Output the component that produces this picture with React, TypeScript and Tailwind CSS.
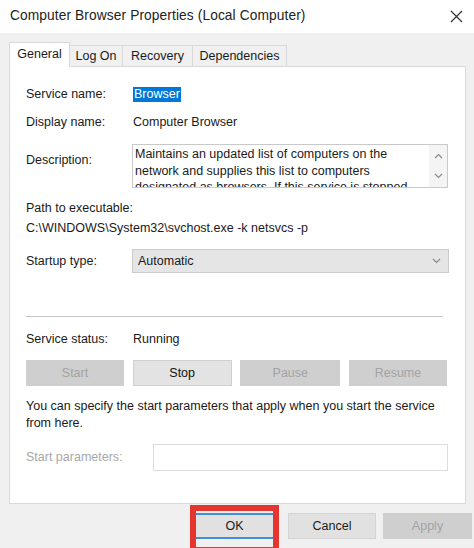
import React from "react";

const FONT = { fontFamily: '"Liberation Sans", Arial, sans-serif' };

function Chevron({ up }: { up?: boolean }) {
  return (
    <svg width="9" height="6" viewBox="0 0 9 6" className="block">
      <path
        d={up ? "M1 5 L4.5 1.5 L8 5" : "M1 1 L4.5 4.5 L8 1"}
        fill="none"
        stroke="#8a8a8a"
        strokeWidth="1.2"
      />
    </svg>
  );
}

function ServiceButton({ label, enabled, w }: { label: string; enabled?: boolean; w: string }) {
  return (
    <div
      className={[
        "h-[26px] flex items-center justify-center text-[12.5px]",
        w,
        enabled
          ? "bg-[#e3e3e3] border border-[#d0d0d0] text-[#111]"
          : "bg-[#cfcfcf] text-[#a3a3a3]",
      ].join(" ")}
    >
      {label}
    </div>
  );
}

export default function App() {
  return (
    <div
      className="w-[474px] h-[548px] bg-[#f0f0f0] overflow-hidden relative text-[#1a1a1a]"
      style={FONT}
    >
      {/* title bar */}
      <div className="h-[33px] bg-white flex items-center justify-between pl-[10px] pr-[10px]">
        <span className="text-[13.75px] text-[#222] tracking-[0.1px]">
          Computer Browser Properties (Local Computer)
        </span>
        <svg width="13" height="13" viewBox="0 0 13 13" className="mr-[1px]">
          <path d="M1 1 L12 12 M12 1 L1 12" stroke="#333" strokeWidth="1.2" />
        </svg>
      </div>

      {/* tabs */}
      <div className="pl-[9px] pt-[10px] flex items-end h-[34px] relative z-10 text-[12.5px]">
        <div className="h-[25px] w-[61px] bg-white border border-b-0 border-[#d9d9d9] flex items-center justify-center pb-[2px]">
          General
        </div>
        <div className="h-[22px] w-[53px] border border-l-0 border-b-0 border-[#d9d9d9] flex items-center justify-center">
          Log On
        </div>
        <div className="h-[22px] w-[70px] border border-l-0 border-b-0 border-[#d9d9d9] flex items-center justify-center">
          Recovery
        </div>
        <div className="h-[22px] w-[94px] border border-l-0 border-b-0 border-[#d9d9d9] flex items-center justify-center">
          Dependencies
        </div>
      </div>

      {/* panel */}
      <div className="ml-[9px] w-[457px] h-[438px] bg-white border border-[#d9d9d9] -mt-px pl-[16px] text-[12.5px]">
        <div className="mt-[19px] flex items-center h-[16px]">
          <span className="w-[107px]">Service name:</span>
          <span className="bg-[#0078d7] text-white px-[1px] h-[15px] leading-[15px]">Browser</span>
        </div>
        <div className="mt-[12px] flex items-center h-[16px]">
          <span className="w-[107px]">Display name:</span>
          <span>Computer Browser</span>
        </div>
        <div className="mt-[14px] flex">
          <span className="w-[106px] pt-[7px]">Description:</span>
          <div className="w-[316px] h-[44px] border border-[#c9c9c9] flex overflow-hidden">
            <div className="flex-1 pl-[2px] pr-[4px] pt-[1px] leading-[16.5px]">
              Maintains an updated list of computers on the network and supplies this list to computers
              designated as browsers. If this service is stopped
            </div>
            <div className="w-[18px] bg-[#f4f4f4] flex flex-col items-center justify-between py-[8px]">
              <Chevron up />
              <Chevron />
            </div>
          </div>
        </div>
        <div className="mt-[12px] h-[16px] leading-[16px]">Path to executable:</div>
        <div className="mt-[4px] h-[16px] leading-[16px]">C:\WINDOWS\System32\svchost.exe -k netsvcs -p</div>
        <div className="mt-[13px] flex items-center">
          <span className="w-[106px]">Startup type:</span>
          <div className="w-[317px] h-[24px] bg-[#e5e5e5] border border-[#cccccc] flex items-center justify-between pl-[5px] pr-[7px]">
            <span>Automatic</span>
            <Chevron />
          </div>
        </div>
        <div className="mt-[43px] w-[417px] h-px bg-[#c4c4c4]" />
        <div className="mt-[14px] flex items-center h-[16px]">
          <span className="w-[107px]">Service status:</span>
          <span>Running</span>
        </div>
        <div className="mt-[13px] flex w-[421px] justify-between">
          <ServiceButton label="Start" w="w-[98px]" />
          <ServiceButton label="Stop" w="w-[99px]" enabled />
          <ServiceButton label="Pause" w="w-[100px]" />
          <ServiceButton label="Resume" w="w-[98px]" />
        </div>
        <div className="mt-[12px] leading-[17px] w-[414px]">
          You can specify the start parameters that apply when you start the service from here.
        </div>
        <div className="mt-[12px] flex items-center">
          <span className="w-[127px] text-[#a8a8a8]">Start parameters:</span>
          <div className="w-[295px] h-[27px] border border-[#dcdcdc] bg-white" />
        </div>
      </div>

      {/* footer */}
      <div className="flex items-start pl-[190px] mt-px">
        <div className="border-[6px] border-[#e5352f] px-0 pt-[2px] pb-[8px]">
          <div className="w-[77px] h-[26px] bg-[#e1e1e1] border-y-2 border-[#3f8fdc] flex items-center justify-center text-[12.5px]">
            OK
          </div>
        </div>
        <div className="ml-[9px] mt-[8px] w-[88px] h-[26px] bg-[#e1e1e1] border border-[#d4d4d4] flex items-center justify-center text-[12.5px]">
          Cancel
        </div>
        <div className="ml-[7px] mt-[8px] w-[89px] h-[26px] bg-[#cfcfcf] text-[#a3a3a3] flex items-center justify-center text-[12.5px]">
          Apply
        </div>
      </div>
    </div>
  );
}
